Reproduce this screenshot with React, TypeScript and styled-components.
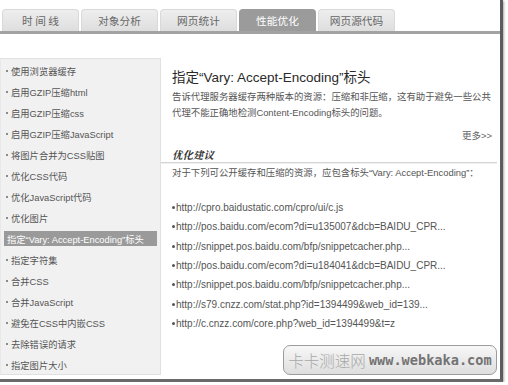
import styled, { createGlobalStyle } from 'styled-components';

const GlobalStyle = createGlobalStyle`
  body {
    margin: 0;
    background: #fff;
    font-family: "Liberation Sans", "Noto Sans CJK SC", sans-serif;
  }
`;

const tabs = ['时 间 线', '对象分析', '网页统计', '性能优化', '网页源代码'];

const menu = [
  '使用浏览器缓存',
  '启用GZIP压缩html',
  '启用GZIP压缩css',
  '启用GZIP压缩JavaScript',
  '将图片合并为CSS贴图',
  '优化CSS代码',
  '优化JavaScript代码',
  '优化图片',
  '指定“Vary: Accept-Encoding”标头',
  '指定字符集',
  '合并CSS',
  '合并JavaScript',
  '避免在CSS中内嵌CSS',
  '去除错误的请求',
  '指定图片大小',
];

const urls = [
  'http://cpro.baidustatic.com/cpro/ui/c.js',
  'http://pos.baidu.com/ecom?di=u135007&dcb=BAIDU_CPR...',
  'http://snippet.pos.baidu.com/bfp/snippetcacher.php...',
  'http://pos.baidu.com/ecom?di=u184041&dcb=BAIDU_CPR...',
  'http://snippet.pos.baidu.com/bfp/snippetcacher.php...',
  'http://s79.cnzz.com/stat.php?id=1394499&web_id=139...',
  'http://c.cnzz.com/core.php?web_id=1394499&t=z',
];

export default function App() {
  return (
    <>
      <GlobalStyle />
      <Frame>
        <TabBar>
          {tabs.map((t) => (
            <Tab key={t} $active={t === '性能优化'}>
              {t}
            </Tab>
          ))}
        </TabBar>

        <Body>
          <Sidebar>
            {menu.map((m, i) => (
              <MenuRow key={m}>
                <MenuItem $active={i === 8}>{m}</MenuItem>
              </MenuRow>
            ))}
          </Sidebar>

          <Main>
            <Title>指定“Vary: Accept-Encoding”标头</Title>
            <Desc>
              告诉代理服务器缓存两种版本的资源：压缩和非压缩，这有助于避免一些公共代理不能正确地检测Content-Encoding标头的问题。
            </Desc>
            <More>更多&gt;&gt;</More>
            <Heading>优化建议</Heading>
            <Desc>对于下列可公开缓存和压缩的资源，应包含标头“Vary: Accept-Encoding”：</Desc>
            <UrlList>
              {urls.map((u, i) => (
                <UrlItem key={i}>{u}</UrlItem>
              ))}
            </UrlList>
          </Main>
        </Body>

        <Watermark>
          <WmName>卡卡测速网</WmName>
          <WmSite>www.webkaka.com</WmSite>
        </Watermark>
      </Frame>
    </>
  );
}

const Frame = styled.div`
  position: relative;
  width: 500px;
  height: 379px;
  border-right: 3px solid #5c5c5c;
  border-bottom: 3px solid #6a6a6a;
  box-shadow: 1px 1px 2px rgba(0, 0, 0, 0.35);
  overflow: hidden;
`;

const TabBar = styled.div`
  display: flex;
  gap: 2px;
  padding: 9px 0 0 2px;
  border-bottom: 3px solid #a3a3a3;
`;

const Tab = styled.div<{ $active?: boolean }>`
  width: 77px;
  height: 22px;
  display: flex;
  align-items: center;
  justify-content: center;
  border-radius: 4px 4px 0 0;
  font-family: "Noto Sans CJK SC", sans-serif;
  font-size: 10.7px;
  color: ${(p) => (p.$active ? '#fff' : '#666')};
  background: ${(p) =>
    p.$active ? '#9b9b9b' : 'linear-gradient(#eeeeee, #dedede)'};
  border: 1px solid ${(p) => (p.$active ? '#9b9b9b' : '#d9d9d9')};
  border-bottom: none;
  box-sizing: border-box;
`;

const Body = styled.div`
  display: flex;
  margin-top: 24px;
`;

const Sidebar = styled.div`
  width: 161px;
  height: 317px;
  box-sizing: border-box;
  padding-top: 1px;
  background: #f1f1f1;
  border: 1px solid #e0e0e0;
  border-left-color: #e8e8e8;
`;

const MenuRow = styled.div`
  height: 21px;
  display: flex;
  align-items: center;
  padding: 0 3px;
`;

const MenuItem = styled.div<{ $active?: boolean }>`
  flex: 1;
  height: 15px;
  display: flex;
  align-items: center;
  padding-left: ${(p) => (p.$active ? '3px' : '2px')};
  font-size: 9.3px;
  white-space: nowrap;
  color: ${(p) => (p.$active ? '#fff' : '#555')};
  background: ${(p) => (p.$active ? '#9a9a9a' : 'transparent')};

  &::before {
    content: '';
    display: ${(p) => (p.$active ? 'none' : 'block')};
    width: 2px;
    height: 2px;
    margin-right: 3px;
    background: #8a8a8a;
  }
`;

const Main = styled.div`
  flex: 1;
  padding-top: 11px;
  color: #444;
`;

const Title = styled.div`
  padding-left: 11px;
  height: 18px;
  line-height: 18px;
  font-size: 13.5px;
  color: #2a2a2a;
`;

const Desc = styled.div`
  margin-top: 2px;
  padding: 0 5px 0 11px;
  font-size: 9.4px;
  line-height: 16px;
  color: #555;
`;

const More = styled.div`
  margin-top: 7px;
  padding-right: 8px;
  text-align: right;
  font-size: 9.5px;
  line-height: 16px;
  color: #666;
`;

const Heading = styled.div`
  margin-top: 3px;
  margin-right: 3px;
  padding-left: 11px;
  font-family: "Noto Serif CJK SC", "Noto Sans CJK SC", serif;
  font-style: italic;
  font-weight: bold;
  font-size: 10.5px;
  line-height: 15px;
  color: #333;
  border-bottom: 1px solid #d4d4d4;
  box-shadow: 0 1px 0 #f0f0f0;
`;

const UrlList = styled.ul`
  list-style: none;
  margin: 17px 0 0;
  padding: 0 0 0 11px;
`;

const UrlItem = styled.li`
  display: flex;
  align-items: center;
  height: 19.3px;
  font-size: 10px;
  color: #555;

  &::before {
    content: '';
    width: 3px;
    height: 3px;
    margin-right: 1px;
    border-radius: 50%;
    background: #555;
  }
`;

const Watermark = styled.div`
  position: absolute;
  right: 3px;
  bottom: 4px;
  width: 214px;
  height: 30px;
  box-sizing: border-box;
  display: flex;
  align-items: center;
  justify-content: center;
  gap: 3px;
  border: 1px solid #9c9c9c;
  border-radius: 7px;
  background: linear-gradient(#f7f7f7, #dedede);
`;

const WmName = styled.span`
  font-family: "Noto Sans CJK SC", sans-serif;
  font-weight: 300;
  font-size: 15.5px;
  color: #a8a8a8;
`;

const WmSite = styled.span`
  font-family: "DejaVu Sans Mono", monospace;
  font-weight: bold;
  font-size: 13.6px;
  color: #737373;
`;
